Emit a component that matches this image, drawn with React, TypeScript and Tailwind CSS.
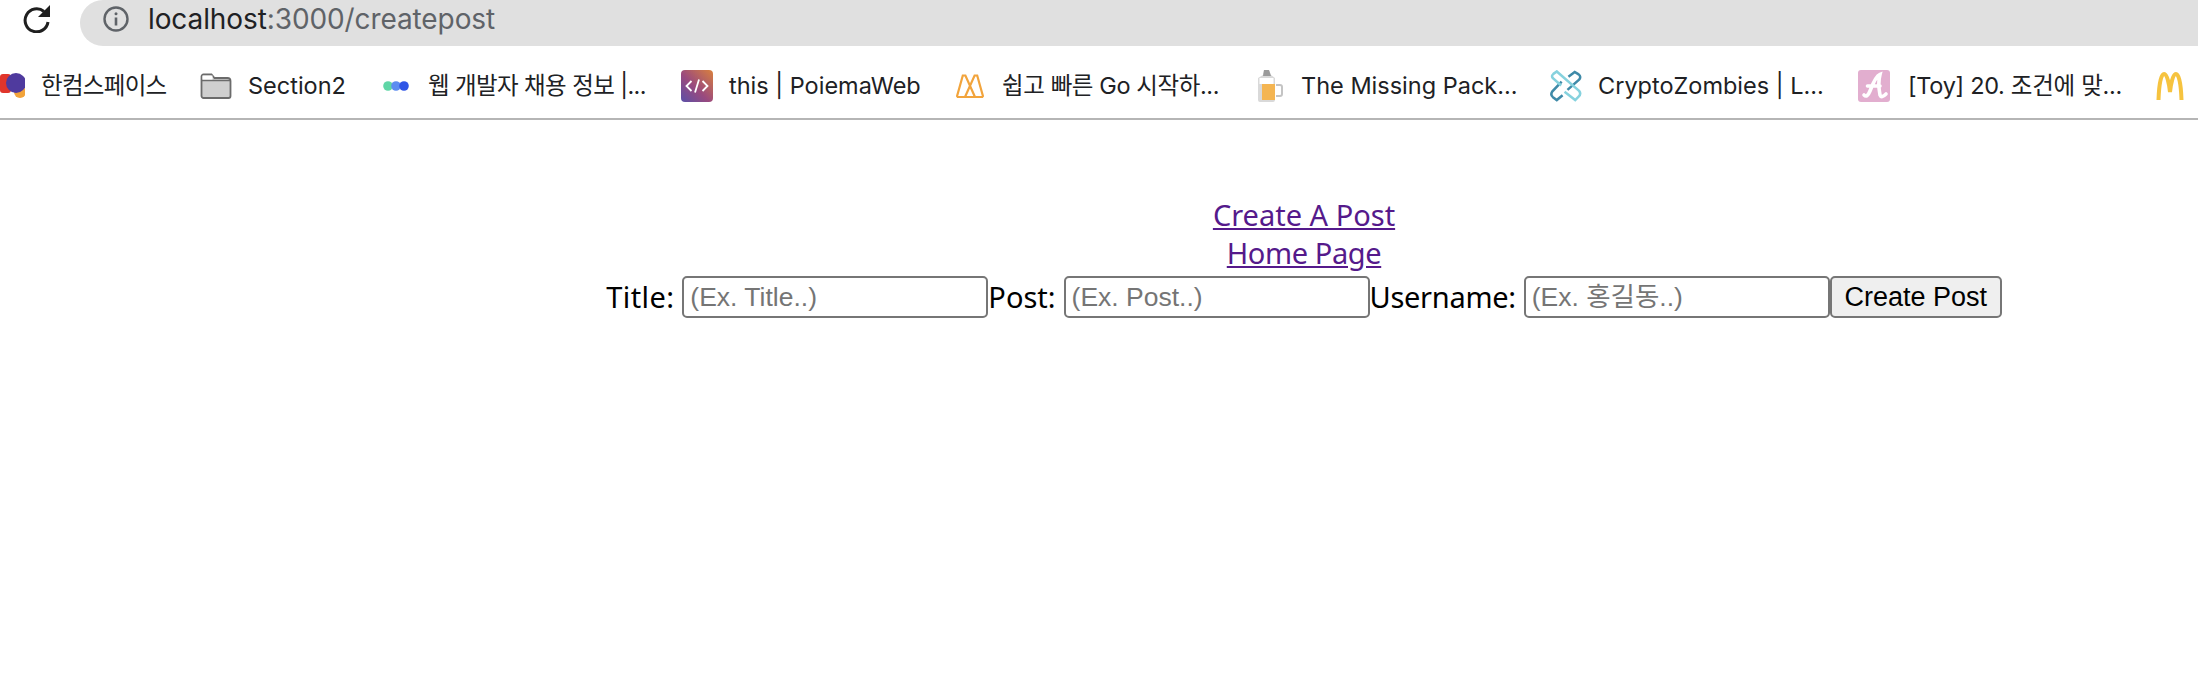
const bookmarks: { icon: React.ReactNode; label: string; w: string }[] = [
  { icon: <HancomIcon />, label: "한컴스페이스", w: "w-[126px] tracking-[-0.7px]" },
  { icon: <FolderIcon />, label: "Section2", w: "w-[99px]" },
  { icon: <DotsIcon />, label: "웹 개발자 채용 정보 |...", w: "w-[220px] tracking-[-0.6px]" },
  { icon: <CodeIcon />, label: "this | PoiemaWeb", w: "w-[192px]" },
  { icon: <GoIcon />, label: "쉽고 빠른 Go 시작하...", w: "w-[218px] tracking-[-0.4px]" },
  { icon: <BeerIcon />, label: "The Missing Pack...", w: "w-[216px]" },
  { icon: <ZombieIcon />, label: "CryptoZombies | L...", w: "w-[227px]" },
  { icon: <ToyIcon />, label: "[Toy] 20. 조건에 맞...", w: "w-[217px] pl-[2px] tracking-[-0.3px]" },
];

function HancomIcon() {
  return (
    <svg width="32" height="32" viewBox="0 0 32 32">
      <rect x="7" y="4" width="11" height="19" rx="3" fill="#e0352b" />
      <circle cx="27" cy="22" r="6" fill="#f2a33a" />
      <circle cx="23" cy="13" r="10" fill="#4f3a9e" />
    </svg>
  );
}

function FolderIcon() {
  return (
    <svg width="32" height="32" viewBox="0 0 32 32">
      <path
        d="M1.5 6.5a2 2 0 0 1 2-2h8l3 3.5h13a3 3 0 0 1 3 3v15a2 2 0 0 1-2 2h-25a2 2 0 0 1-2-2z"
        fill="#cfcfcf"
        stroke="#6b6b6b"
        strokeWidth="1.8"
      />
      <path d="M1.5 10.5h29" stroke="#6b6b6b" strokeWidth="1.5" />
      <rect x="2.5" y="5.5" width="10" height="4" fill="#fff" />
    </svg>
  );
}

function DotsIcon() {
  return (
    <svg width="28" height="12" viewBox="0 0 28 12">
      <circle cx="6" cy="6" r="4.8" fill="#5fd6a6" />
      <circle cx="14" cy="6" r="4.8" fill="#5b8cf0" />
      <circle cx="22" cy="6" r="4.8" fill="#2f55e6" />
    </svg>
  );
}

function CodeIcon() {
  return (
    <svg width="32" height="32" viewBox="0 0 32 32">
      <defs>
        <linearGradient id="code" x1="1" y1="0" x2="0" y2="1">
          <stop offset="0" stopColor="#d9803d" />
          <stop offset="0.55" stopColor="#9a4a7e" />
          <stop offset="1" stopColor="#5a4fa8" />
        </linearGradient>
      </defs>
      <rect width="32" height="32" rx="4" fill="url(#code)" />
      <path d="M10.5 11 5.5 16l5 5M21.5 11l5 5-5 5M18 9.5 14 22.5" fill="none" stroke="#fff" strokeWidth="1.8" />
    </svg>
  );
}

function GoIcon() {
  return (
    <svg width="28" height="24" viewBox="0 0 28 24">
      <path
        d="M.8 23 6.8 1.5h2.6L19 23M27.2 23 21.2 1.5h-2.6L9 23M.8 23h26.4"
        fill="none"
        stroke="#f2a43c"
        strokeWidth="2.2"
      />
    </svg>
  );
}

function BeerIcon() {
  return (
    <svg width="27" height="32" viewBox="0 0 27 32">
      <path d="M8 0h5l2 5 4 3v22a2 2 0 0 1-2 2H4a2 2 0 0 1-2-2V8l5-3z" fill="#d9d9d9" />
      <path d="M8 0h5l2 6H7z" fill="#9a9a9a" />
      <rect x="3.5" y="8" width="14" height="6" fill="#fff" />
      <rect x="6" y="14" width="13" height="16" fill="#f4b552" />
      <path d="M20 15h4a2 2 0 0 1 2 2v7a2 2 0 0 1-2 2h-4" fill="none" stroke="#c4c4c4" strokeWidth="2" />
    </svg>
  );
}

function ZombieIcon() {
  return (
    <svg width="33" height="32" viewBox="0 0 33 32" fill="none" strokeWidth="2.6">
      <path d="M18 20 30 9.5Q32.5 6.5 29.5 4L25.500 1.500 19 6.500M12 11.500 2.500 21.500Q0 25 3 27.500L7 30.500 13 25.500" stroke="#3f8aa8" />
      <path d="M11.500 15.500 3 8Q1 5.500 3.500 3.500L7 1 30 21Q32.500 24 29.500 27L26 30.500 15 22" stroke="#86d2de" />
    </svg>
  );
}

function ToyIcon() {
  return (
    <svg width="32" height="32" viewBox="0 0 32 32">
      <rect width="32" height="32" rx="3" fill="#e2aecf" />
      <path
        d="M6 25C8 27 10 26 12 21 15 13 18 6 22 4.500 20 12 21 20 22 25 23 27.500 25 27 28 24M9.500 16H22"
        fill="none"
        stroke="#fff"
        strokeWidth="3.600"
        strokeLinecap="round"
      />
    </svg>
  );
}

function ArchesIcon() {
  return (
    <svg width="28" height="28" viewBox="0 0 28 28">
      <path
        d="M2.500 28C3 12 5 2 8 2c3 0 5 9 6 18 1-9 3-18 6-18s5 10 5.500 26"
        fill="none"
        stroke="#f6c33f"
        strokeWidth="4"
      />
    </svg>
  );
}

function ReloadIcon() {
  return (
    <svg width="27" height="28" viewBox="0 0 27 28" fill="none">
      <path d="M21 6.500A11.500 11.500 0 1 0 25 17" stroke="#1f1f1f" strokeWidth="3" />
      <path d="M27 0v12H15z" fill="#1f1f1f" />
    </svg>
  );
}

function InfoIcon() {
  return (
    <svg width="26" height="26" viewBox="0 0 26 26" fill="none">
      <circle cx="13" cy="13" r="11.500" stroke="#5f6368" strokeWidth="2.400" />
      <path d="M13 11.500v8" stroke="#5f6368" strokeWidth="2.600" />
      <circle cx="13" cy="7.800" r="1.500" fill="#5f6368" />
    </svg>
  );
}

function Field({ label, placeholder, spacing }: { label: string; placeholder: string; spacing: string }) {
  return (
    <>
      <label className={`pr-[8px] ${spacing}`}>{label}</label>
      <input
        placeholder={placeholder}
        className="box-border h-[42px] w-[306px] rounded-[5px] border-2 border-[#767676] bg-white px-[6px] font-['Liberation_Sans','Noto_Sans_CJK_KR',sans-serif] text-[26.5px] placeholder:text-[#757575]"
      />
    </>
  );
}

export default function App() {
  return (
    <div className="h-[696px] w-[2198px] overflow-hidden bg-white text-black">
      <div className="flex h-[46px]">
        <div className="w-[80px] pt-[5px] pl-[23px]">
          <ReloadIcon />
        </div>
        <div className="flex h-[46px] flex-1 items-center gap-[19px] rounded-l-[23px] bg-[#e0e0e0] pb-[8px] pl-[23px]">
          <InfoIcon />
          <span className="font-['Inter',sans-serif] text-[28px] tracking-[-0.1px] text-[#202124]">
            localhost<span className="text-[#5f6368]">:3000/createpost</span>
          </span>
        </div>
      </div>

      <div className="h-[74px] overflow-hidden border-b-2 border-[#b5b5b5] pt-[8px]">
        <div className="-ml-[7px] flex h-full items-center gap-[33px] font-['Inter','Noto_Sans_CJK_KR',sans-serif] text-[23.5px] text-[#202124]">
          {bookmarks.map((b) => (
            <div key={b.label} className="flex shrink-0 items-center gap-[16px]">
              <div className="flex w-[32px] shrink-0 justify-center">{b.icon}</div>
              <span className={`whitespace-nowrap ${b.w}`}>{b.label}</span>
            </div>
          ))}
          <ArchesIcon />
        </div>
      </div>

      <div className="pt-[76px] pl-[410px] text-center font-['Noto_Sans','Noto_Sans_CJK_KR',sans-serif] text-[29px] leading-[38px]">
        <div>
          <a href="#" className="text-[#551a8b] underline">
            Create A Post
          </a>
        </div>
        <div>
          <a href="#" className="tracking-[-0.4px] text-[#551a8b] underline">
            Home Page
          </a>
        </div>
        <div className="mt-[4px] flex items-center justify-center">
          <Field label="Title:" placeholder="(Ex. Title..)" spacing="tracking-[0.4px]" />
          <Field label="Post:" placeholder="(Ex. Post..)" spacing="tracking-[0px]" />
          <Field label="Username:" placeholder="(Ex. 홍길동..)" spacing="tracking-[-0.3px]" />
          <button className="box-border h-[42px] w-[172px] rounded-[5px] border-2 border-[#767676] bg-[#efefef] font-['Liberation_Sans',sans-serif] text-[27px]">
            Create Post
          </button>
        </div>
      </div>
    </div>
  );
}
